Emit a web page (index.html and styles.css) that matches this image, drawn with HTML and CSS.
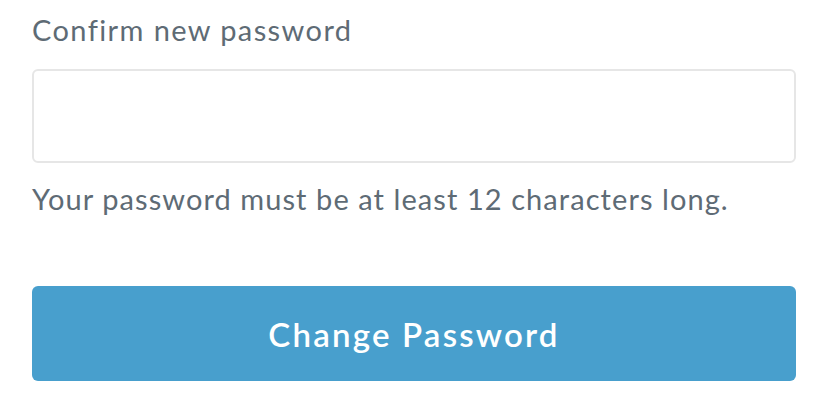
FILE: index.html
```html
<!DOCTYPE html>
<html lang="en">
<head>
    <meta charset="UTF-8">
    <meta name="viewport" content="width=device-width, initial-scale=1.0">
    <title>Change Password</title>
    <link rel="stylesheet" href="styles.css">
</head>
<body>
    <form class="password-form">
        <label for="confirm">Confirm new password</label>
        <input type="password" name="confirm" id="confirm"/>
        <span class="hint">Your password must be at least 12 characters long.</span>
        <button type="submit" class="submit-btn">Change Password</button>
    </form>
</body>
</html>
```

FILE: styles.css
```css
body {
    margin: 0;
    background: #fff;
    font-family: Lato, "Open Sans", sans-serif;
    color: #5e6b75;
}
.password-form {
    width: 764px;
    padding: 13px 32px 0;
    display: flex;
    flex-direction: column;
}
label {
    font-size: 29px;
    line-height: 34px;
    letter-spacing: 1.4px;
    margin-bottom: 22px;
}
input[type="password"] {
    height: 94px;
    border: 2px solid #e6e6e6;
    border-radius: 6px;
    box-sizing: border-box;
    margin: 0;
}
.hint {
    font-size: 29px;
    line-height: 34px;
    letter-spacing: 1.07px;
    margin-top: 19px;
}
.submit-btn {
    margin-top: 70px;
    height: 95px;
    border: none;
    border-radius: 6px;
    background-color: #489fcd;
    color: #fff;
    font-family: Lato, "Open Sans", sans-serif;
    font-size: 33px;
    font-weight: 600;
    letter-spacing: 2.2px;
    cursor: pointer;
}
```
